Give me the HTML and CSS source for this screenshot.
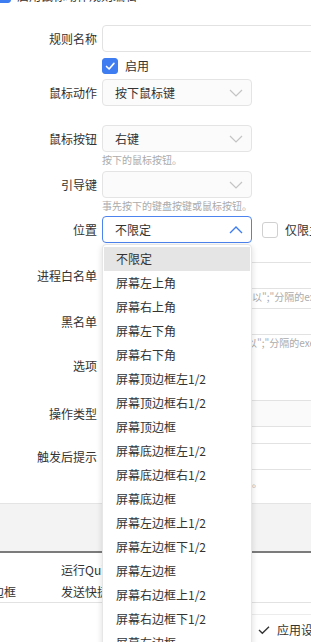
FILE: index.html
```html
<!DOCTYPE html>
<html lang="zh-CN">
<head>
    <meta charset="UTF-8">
    <meta name="viewport" content="width=device-width, initial-scale=1.0">
    <title>规则设置</title>
    <link rel="stylesheet" href="styles.css">
</head>
<body>
    <div class="page">
        <div class="title-row">
            <span class="cb checked"><svg viewBox="0 0 16 16"><polyline points="4,8.5 7,11.5 12.5,5" /></svg></span>
            <span class="title-text">启用鼠标动作规则编辑</span>
        </div>

        <div class="form">
            <div class="form-item first">
                <label class="form-label">规则名称</label>
                <div class="control"><div class="input wide"></div></div>
            </div>
            <div class="form-item check-row">
                <label class="form-label"></label>
                <div class="control">
                    <span class="cb checked"><svg viewBox="0 0 16 16"><polyline points="4,8.5 7,11.5 12.5,5" /></svg></span>
                    <span class="cb-text">启用</span>
                </div>
            </div>
            <div class="form-item after-check">
                <label class="form-label">鼠标动作</label>
                <div class="control">
                    <div class="select">按下鼠标键<svg class="arrow" viewBox="0 0 14 8"><polyline points="1,1 7,7 13,1" /></svg></div>
                </div>
            </div>
            <div class="form-item">
                <label class="form-label">鼠标按钮</label>
                <div class="control">
                    <div class="select">右键<svg class="arrow" viewBox="0 0 14 8"><polyline points="1,1 7,7 13,1" /></svg></div>
                    <div class="hint">按下的鼠标按钮。</div>
                </div>
            </div>
            <div class="form-item close">
                <label class="form-label">引导键</label>
                <div class="control">
                    <div class="select"><svg class="arrow" viewBox="0 0 14 8"><polyline points="1,1 7,7 13,1" /></svg></div>
                    <div class="hint">事先按下的键盘按键或鼠标按钮。</div>
                </div>
            </div>
            <div class="form-item closer">
                <label class="form-label">位置</label>
                <div class="control row">
                    <div class="select-wrap">
                        <div class="select active">不限定<svg class="arrow up" viewBox="0 0 14 8"><polyline points="1,7 7,1 13,7" /></svg></div>
                        <ul class="dropdown" id="positionList"></ul>
                    </div>
                    <span class="cb"></span>
                    <span class="cb-text">仅限主显示器</span>
                </div>
            </div>
            <div class="form-item">
                <label class="form-label">进程白名单</label>
                <div class="control">
                    <div class="input wide"></div>
                    <div class="hint">在以下程序中触发，留空则不限，以";"分隔的exe文件名。</div>
                </div>
            </div>
            <div class="form-item close">
                <label class="form-label">黑名单</label>
                <div class="control">
                    <div class="input wide"></div>
                    <div class="hint">在这些程序中将不会触发此规则, 以";"分隔的exe文件名。</div>
                </div>
            </div>
            <div class="form-item options">
                <label class="form-label">选项</label>
                <div class="control"></div>
            </div>
            <div class="form-item">
                <label class="form-label">操作类型</label>
                <div class="control"><div class="input wide filled"></div></div>
            </div>
            <div class="form-item notice">
                <label class="form-label">触发后提示</label>
                <div class="control">
                    <div class="input wide"></div>
                    <div class="hint spaced">触发后的提示信息，留空可不选择。</div>
                </div>
            </div>
        </div>

        <div class="band"></div>

        <div class="rule-table">
            <div class="rule-row">
                <span class="col-pos"></span>
                <span class="col-act">运行QuickLook</span>
            </div>
            <div class="rule-row">
                <span class="col-pos">屏幕底边框</span>
                <span class="col-act">发送快捷键</span>
            </div>
        </div>

        <div class="footer">
            <button class="apply-btn"><svg viewBox="0 0 14 12"><polyline points="1,6 5,10 13,2" /></svg>应用设置</button>
        </div>
    </div>

    <script>
        // 位置下拉选项
        const positions = [
            '不限定', '屏幕左上角', '屏幕右上角', '屏幕左下角', '屏幕右下角',
            '屏幕顶边框左1/2', '屏幕顶边框右1/2', '屏幕顶边框',
            '屏幕底边框左1/2', '屏幕底边框右1/2', '屏幕底边框',
            '屏幕左边框上1/2', '屏幕左边框下1/2', '屏幕左边框',
            '屏幕右边框上1/2', '屏幕右边框下1/2', '屏幕右边框'
        ];
        const positionList = document.getElementById('positionList');
        positions.forEach((name, i) => {
            const li = document.createElement('li');
            li.className = 'option' + (i === 0 ? ' selected' : '');
            li.textContent = name;
            positionList.appendChild(li);
        });
    </script>
</body>
</html>
```

FILE: styles.css
```css
body {
    margin: 0;
    width: 311px;
    height: 642px;
    overflow: hidden;
    background: #fff;
    font-family: "Noto Sans CJK SC", "Noto Sans", sans-serif;
    font-size: 12px;
    color: #333;
}
.page {
    position: relative;
}

/* 顶部被截断的标题行 */
.title-row {
    display: flex;
    align-items: center;
    gap: 6px;
    height: 16px;
    margin-top: -13px;
    margin-left: -5px;
}
.title-text {
    font-size: 12px;
    white-space: nowrap;
}

/* 复选框 */
.cb {
    display: inline-block;
    box-sizing: border-box;
    width: 16px;
    height: 16px;
    border: 1px solid #d0d0d0;
    border-radius: 3px;
    background: #fff;
    flex-shrink: 0;
}
.cb.checked {
    background: #3e7cf2;
    border-color: #3e7cf2;
}
.cb svg {
    display: block;
    width: 14px;
    height: 14px;
    fill: none;
    stroke: #fff;
    stroke-width: 1.8;
    stroke-linecap: round;
    stroke-linejoin: round;
}
.cb-text {
    margin-left: 7px;
    line-height: 16px;
    white-space: nowrap;
}

/* 表单 */
.form-item {
    display: flex;
    margin-top: 19px;
}
.form-item.first {
    margin-top: 22px;
}
.form-item.check-row {
    margin-top: 6px;
}
.form-item.after-check {
    margin-top: 5px;
}
.form-item.close {
    margin-top: 4px;
}
.form-item.closer {
    margin-top: 3px;
}
.form-item.options {
    margin-top: 2px;
    height: 29px;
}
.form-item.notice {
    margin-top: 16px;
}
.form-label {
    width: 102px;
    flex-shrink: 0;
    box-sizing: border-box;
    padding-right: 5px;
    text-align: right;
    line-height: 27px;
    white-space: nowrap;
}
.control {
    display: flex;
    flex-direction: column;
    min-width: 0;
}
.control.row {
    flex-direction: row;
    align-items: center;
}
.check-row .control {
    flex-direction: row;
    align-items: center;
}

.input {
    box-sizing: border-box;
    height: 27px;
    border: 1px solid #e2e2e2;
    border-radius: 4px;
    background: #fff;
}
.input.wide {
    width: 260px;
}
.input.filled {
    background: #fafafa;
}

.select-wrap {
    position: relative;
    margin-right: 10px;
}
.select {
    position: relative;
    box-sizing: border-box;
    width: 150px;
    height: 27px;
    padding-left: 12px;
    line-height: 25px;
    border: 1px solid #e4e4e4;
    border-radius: 4px;
    background: #fbfbfb;
    white-space: nowrap;
}
.select.active {
    border-color: #4c83ef;
    background: #fff;
}
.arrow {
    position: absolute;
    right: 8px;
    top: 9px;
    width: 14px;
    height: 8px;
    fill: none;
    stroke: #c4c4c4;
    stroke-width: 1.2;
}
.arrow.up {
    stroke: #3e7cf2;
    stroke-width: 1.4;
}

.hint {
    font-size: 10px;
    line-height: 15px;
    color: #ababab;
    white-space: nowrap;
}
.hint.spaced {
    margin-top: 5px;
}

/* 位置下拉列表 */
.dropdown {
    position: absolute;
    top: 28px;
    left: 0;
    z-index: 10;
    box-sizing: border-box;
    width: 150px;
    margin: 0;
    padding: 2px 1px 0;
    list-style: none;
    background: #fff;
    border: 1px solid #e6e6e6;
    border-radius: 4px;
    box-shadow: 0 2px 6px rgba(0, 0, 0, 0.14);
}
.option {
    height: 24px;
    line-height: 24px;
    padding-left: 12px;
    white-space: nowrap;
}
.option.selected {
    background: #e5e5e5;
}

/* 灰色分隔区 */
.band {
    margin-top: 13px;
    height: 47px;
    background: #f3f3f3;
    border-top: 1px solid #e4e4e4;
    border-bottom: 2px solid #7b7b7b;
}

/* 规则列表 */
.rule-table {
    padding-top: 6px;
    border-bottom: 1px solid #e2e2e2;
}
.rule-row {
    display: flex;
    height: 22px;
    line-height: 22px;
}
.rule-row:last-child {
    height: 21px;
}
.col-pos {
    width: 105px;
    margin-left: -44px;
    box-sizing: border-box;
    white-space: nowrap;
}
.col-act {
    white-space: nowrap;
}

/* 底部按钮 */
.footer {
    display: flex;
    justify-content: flex-end;
    margin-top: 11px;
    margin-right: -26px;
}
.apply-btn {
    display: flex;
    align-items: center;
    gap: 7px;
    height: 30px;
    padding: 0 12px;
    border: none;
    border-top: 1px solid #ececec;
    background: #fff;
    font-family: inherit;
    font-size: 12px;
    color: #333;
}
.apply-btn svg {
    width: 12px;
    height: 10px;
    fill: none;
    stroke: #333;
    stroke-width: 1.6;
}
```
